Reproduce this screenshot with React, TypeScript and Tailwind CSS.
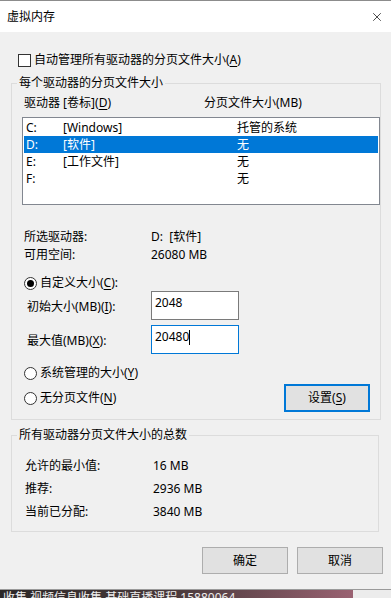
import { X } from 'lucide-react'

type Drive = { letter: string; label: string; size: string; selected?: boolean }

const drives: Drive[] = [
  { letter: 'C:', label: '[Windows]', size: '托管的系统' },
  { letter: 'D:', label: '[软件]', size: '无', selected: true },
  { letter: 'E:', label: '[工作文件]', size: '无' },
  { letter: 'F:', label: '', size: '无' },
]

function Radio({ checked, children }: { checked?: boolean; children: React.ReactNode }) {
  return (
    <div className="flex h-4 items-center gap-[3px]">
      <span className="flex size-[13px] items-center justify-center rounded-full border border-[#333] bg-white">
        {checked && <span className="size-[7px] rounded-full bg-black" />}
      </span>
      <span>{children}</span>
    </div>
  )
}

function Mn({ children }: { children: React.ReactNode }) {
  return <u className="underline underline-offset-2">{children}</u>
}

export default function App() {
  return (
    <div className="flex h-[598px] w-[391px] flex-col overflow-hidden bg-[#f0f0f0] font-['Noto_Sans','Noto_Sans_CJK_SC',sans-serif] text-[12px] leading-4 text-black">
      {/* title bar */}
      <div className="flex h-[32px] shrink-0 items-center justify-between border-t border-[#8c8c8c] bg-white pl-[7px] pr-[7px]">
        <span>虚拟内存</span>
        <X className="size-[14px]" strokeWidth={1.2} />
      </div>

      {/* body */}
      <div className="flex flex-1 flex-col pl-[11px]">
        <div className="ml-[7px] mt-[20px] flex h-4 items-center gap-[3px]">
          <span className="size-[13px] border border-[#333] bg-white" />
          <span>
            自动管理所有驱动器的分页文件大小(<Mn>A</Mn>)
          </span>
        </div>

        <fieldset className="mt-[7px] h-[345px] w-[368px] border border-[#dcdcdc] p-0">
          <legend className="ml-[5px] px-[2px] leading-4">每个驱动器的分页文件大小</legend>

          <div className="ml-[12px] mt-[4px] flex h-4">
            <span className="w-[180px]">
              驱动器 [卷标](<Mn>D</Mn>)
            </span>
            <span>分页文件大小(MB)</span>
          </div>

          <div className="ml-[10px] mt-[6px] h-[88px] w-[358px] border border-[#828790] bg-white p-[1px]">
            {drives.map((d) => (
              <div
                key={d.letter}
                className={`flex h-[17px] items-center pl-[2px] ${d.selected ? 'bg-[#0078d7] text-white' : ''}`}
              >
                <span className="w-[37px]">{d.letter}</span>
                <span className="w-[174px]">{d.label}</span>
                <span>{d.size}</span>
              </div>
            ))}
          </div>

          <div className="ml-[12px] mt-[24px] flex h-4">
            <span className="w-[127px]">所选驱动器:</span>
            <span>D:&nbsp;&nbsp;[软件]</span>
          </div>
          <div className="ml-[12px] mt-[2px] flex h-4">
            <span className="w-[127px]">可用空间:</span>
            <span>26080 MB</span>
          </div>

          <div className="ml-[12px] mt-[12px]">
            <Radio checked>
              自定义大小(<Mn>C</Mn>):
            </Radio>
          </div>

          <div className="ml-[15px] flex items-center">
            <span className="w-[124px] pt-[2px]">
              初始大小(MB)(<Mn>I</Mn>):
            </span>
            <div className="h-[29px] w-[88px] border border-[#7a7a7a] bg-white pl-[3px] pt-[3px]">2048</div>
          </div>
          <div className="ml-[15px] mt-[5px] flex items-center">
            <span className="w-[124px] pt-[2px]">
              最大值(MB)(<Mn>X</Mn>):
            </span>
            <div className="flex h-[29px] w-[88px] items-start border border-[#0078d7] bg-white pl-[3px] pt-[3px]">
              20480
              <span className="mt-[1px] inline-block h-[15px] w-px bg-black" />
            </div>
          </div>

          <div className="ml-[12px] mt-[11px] flex items-start justify-between pr-[10px]">
            <div className="flex flex-col gap-[9px]">
              <Radio>
                系统管理的大小(<Mn>Y</Mn>)
              </Radio>
              <Radio>
                无分页文件(<Mn>N</Mn>)
              </Radio>
            </div>
            <button className="mt-[19px] h-[28px] w-[86px] border-2 border-[#0078d7] bg-[#e1e1e1]">
              设置(<Mn>S</Mn>)
            </button>
          </div>
        </fieldset>

        <fieldset className="mt-[7px] h-[105px] w-[368px] border border-[#dcdcdc] p-0">
          <legend className="ml-[5px] px-[2px] leading-4">所有驱动器分页文件大小的总数</legend>
          <div className="ml-[13px] mt-[15px] flex flex-col gap-[7px]">
            <div className="flex h-4">
              <span className="w-[128px]">允许的最小值:</span>
              <span>16 MB</span>
            </div>
            <div className="flex h-4">
              <span className="w-[128px]">推荐:</span>
              <span>2936 MB</span>
            </div>
            <div className="flex h-4">
              <span className="w-[128px]">当前已分配:</span>
              <span>3840 MB</span>
            </div>
          </div>
        </fieldset>

        <div className="ml-[191px] mt-[15px] flex gap-[9px]">
          <button className="h-[27px] w-[86px] border border-[#adadad] bg-[#e1e1e1]">确定</button>
          <button className="h-[27px] w-[86px] border border-[#adadad] bg-[#e1e1e1]">取消</button>
        </div>
      </div>

      {/* desktop behind the dialog */}
      <div className="flex h-[9px] shrink-0 border-t border-[#9a9a9a]">
        <div className="w-[353px] overflow-hidden whitespace-nowrap bg-gradient-to-r from-[#2b2727] via-[#4a3a3c] to-[#9a6272] pl-[3px] text-[#eeeeee]">
          收集 视频信息收集 基础直播课程 15880064
        </div>
        <div className="flex-1 bg-[#ececec]" />
      </div>
    </div>
  )
}
